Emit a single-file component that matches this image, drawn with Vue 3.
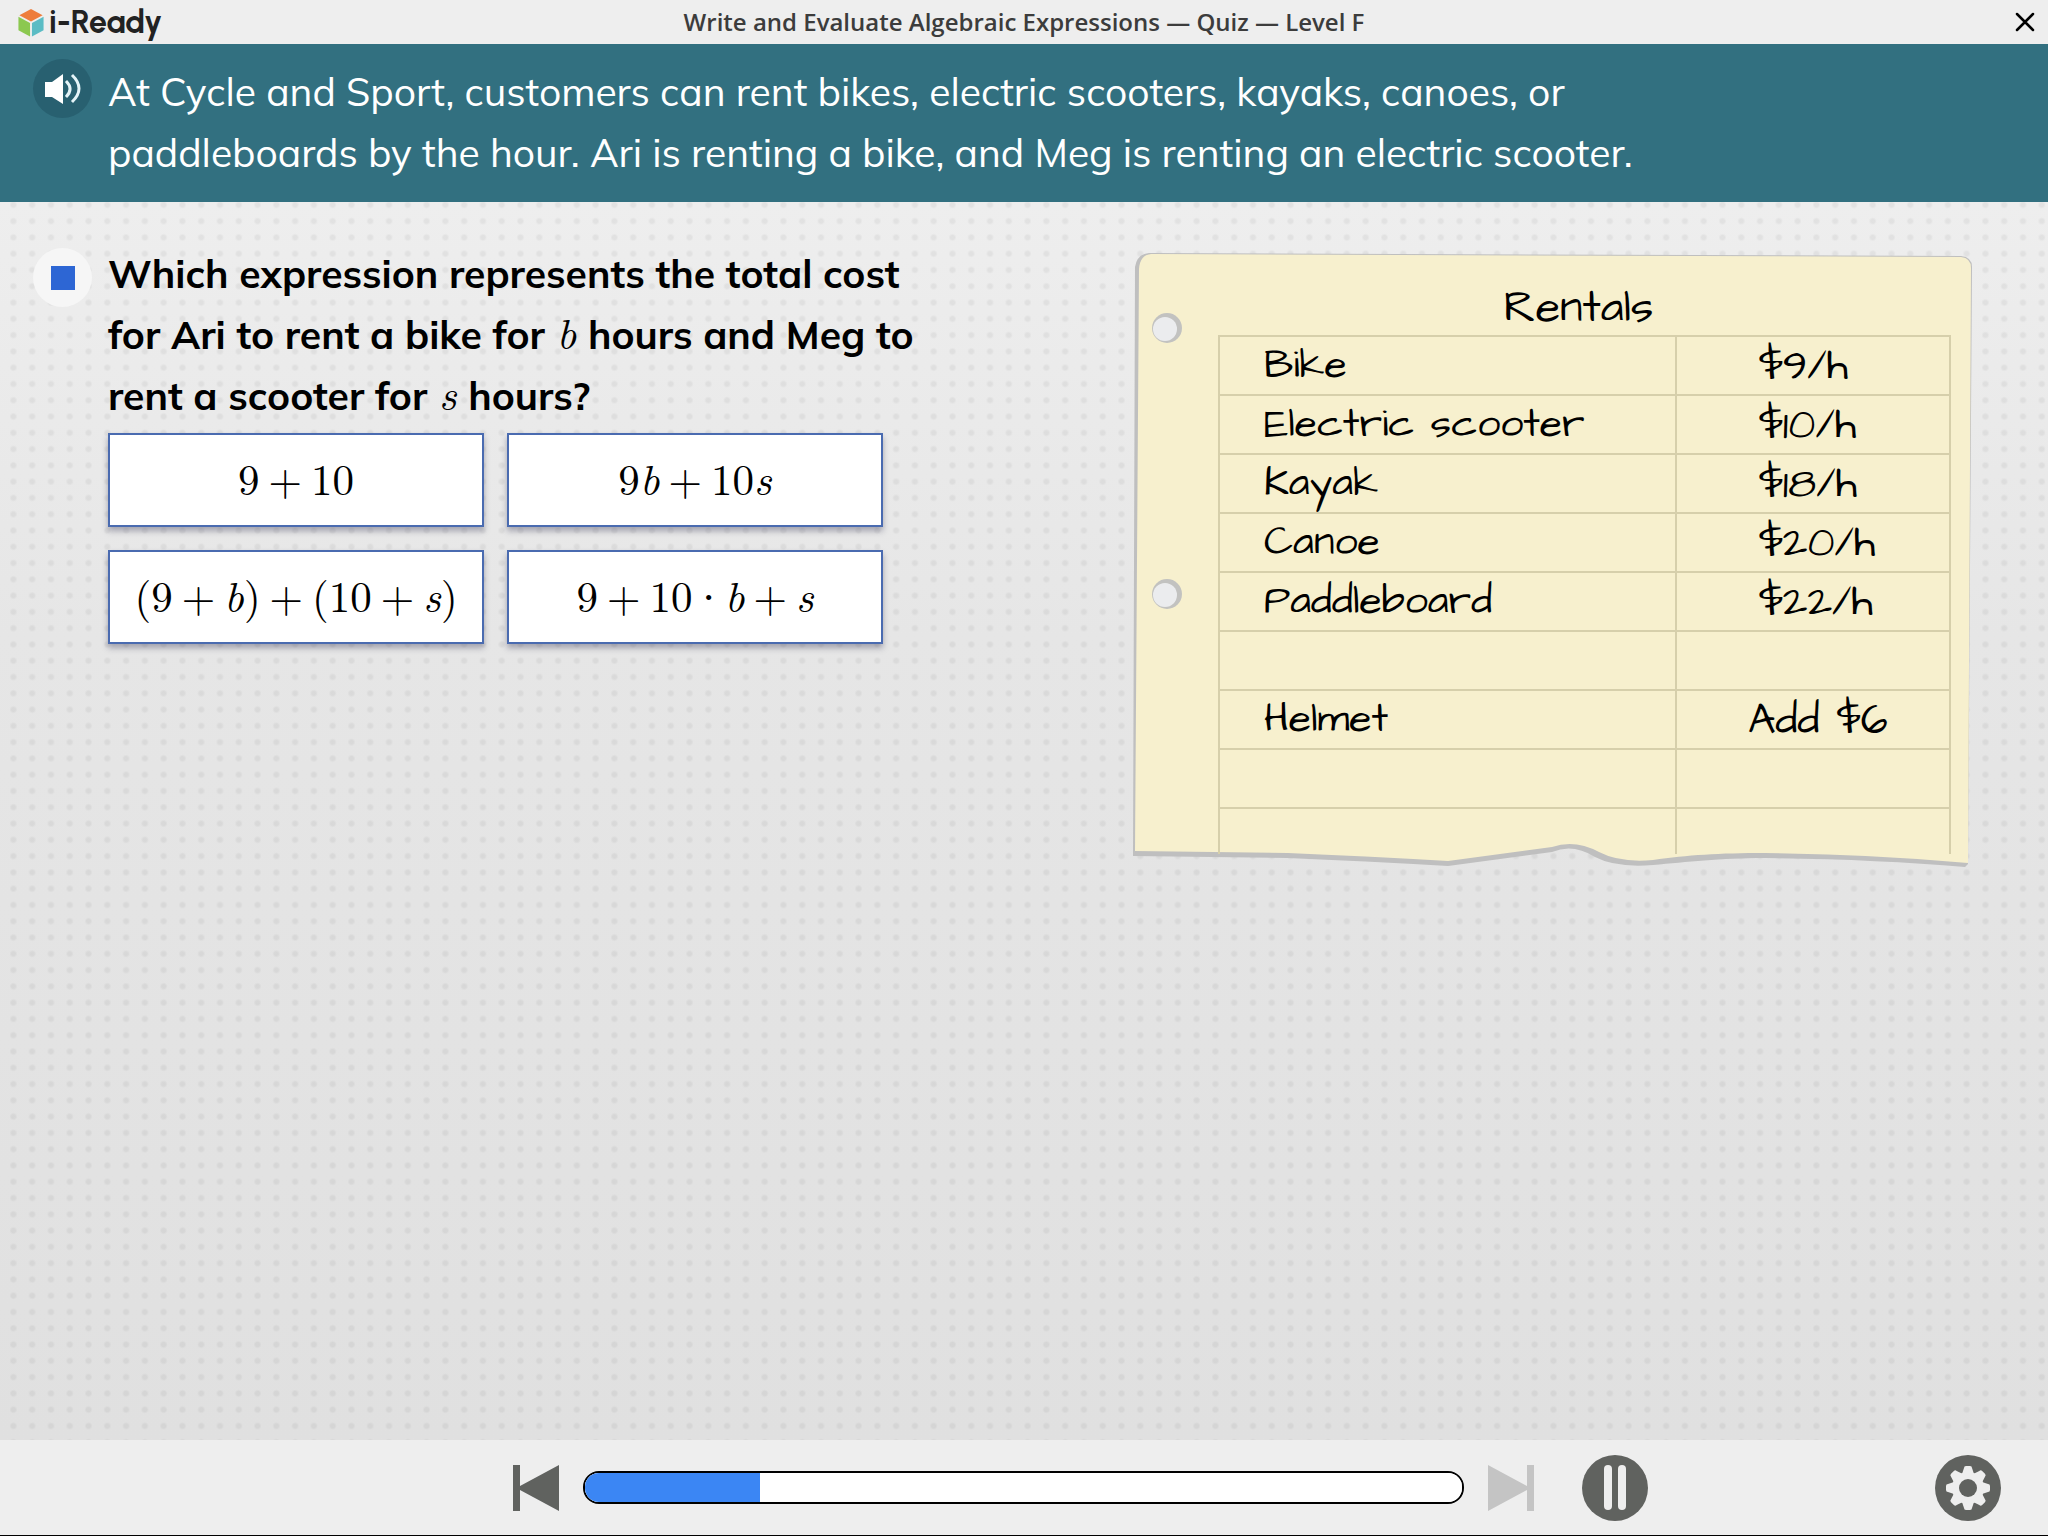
<script setup>
import { ref } from 'vue'

const progress = ref(20)
const selected = ref(null)

const answers = [
  ['9', '+', '10'],
  ['9', 'b', '+', '10', 's'],
  ['(', '9', '+', 'b', ')', '+', '(', '10', '+', 's', ')'],
  ['9', '+', '10', '·', 'b', '+', 's'],
]

const rentals = [
  { name: 'Bike', price: '$9/h' },
  { name: 'Electric scooter', price: '$10/h' },
  { name: 'Kayak', price: '$18/h' },
  { name: 'Canoe', price: '$20/h' },
  { name: 'Paddleboard', price: '$22/h' },
  { name: '', price: '' },
  { name: 'Helmet', price: 'Add $6', wide: true },
  { name: '', price: '' },
  { name: '', price: '' },
]

function tokenClass(token) {
  if (token === '+') return 'operator'
  if (token === '·') return 'operator times'
  return /[a-z]/.test(token) ? 'variable' : 'number'
}
</script>

<template>
  <div class="app">
    <header class="topbar">
      <div class="brand">
        <svg class="brand-cube" viewBox="0 0 26 30" aria-hidden="true">
          <path fill="#ee7d3b" d="M13 1 25 7.500 13 14 1 7.500z" />
          <path fill="#8cc850" d="M0 9 12 15.500v14L0 23z" />
          <path fill="#5bbcc4" d="M26 9 14 15.500v14L26 23z" />
        </svg>
        <span class="brand-name">i-Ready</span>
      </div>
      <h1 class="title">Write and Evaluate Algebraic Expressions — Quiz — Level F</h1>
      <button class="close" type="button" aria-label="Close">
        <svg viewBox="0 0 20 20" aria-hidden="true">
          <path d="M2 2 18 18M18 2 2 18" stroke="#000" stroke-width="2.500" stroke-linecap="round" />
        </svg>
      </button>
    </header>

    <section class="prompt">
      <button class="speak" type="button" aria-label="Read aloud">
        <svg viewBox="0 0 36 32" aria-hidden="true">
          <path fill="#fff" d="M0 9h7l11-8v30l-11-7H0z" />
          <g fill="none" stroke="#e4f4f8" stroke-width="3">
            <path d="M21 8q8 8 0 16" />
            <path d="M27 2q14 13.500 0 27" />
          </g>
        </svg>
      </button>
      <p class="prompt-text">
        At Cycle and Sport, customers can rent bikes, electric scooters, kayaks, canoes, or<br />
        paddleboards by the hour. Ari is renting a bike, and Meg is renting an electric scooter.
      </p>
    </section>

    <main class="stage">
      <section class="question">
        <button class="stop" type="button" aria-label="Stop reading"><span class="stop-mark"></span></button>
        <div class="question-body">
          <h2 class="question-text">
            Which expression represents the total cost<br />
            for Ari to rent a bike for <i class="math">b</i> hours and Meg to<br />
            rent a scooter for <i class="math">s</i> hours?
          </h2>
          <div class="answers">
            <button
              v-for="(tokens, index) in answers"
              :key="index"
              class="answer"
              type="button"
              :aria-pressed="selected === index"
              @click="selected = index"
            >
              <span class="expression"><span v-for="(token, i) in tokens" :key="i" :class="tokenClass(token)">{{ token }}</span></span>
            </button>
          </div>
        </div>
      </section>

      <section class="note">
        <svg class="paper" viewBox="0 0 839 615" preserveAspectRatio="none" aria-hidden="true">
          <path
            fill="#bfbfbf"
            d="M2 14Q4 1 16 0L828 3Q839 4 839 14L835 611 832 614Q740 606 632 605C585 605 555 609 520 612Q483 615 462 604Q440 590 419 599L315 613Q230 608 155 605L0 603z"
          />
          <path
            fill="#f7f0ce"
            d="M6 16Q7 2 18 1L828 4Q838 5 838 15L835 610Q740 601 632 600C585 600 555 602 520 607Q487 610 466 599Q442 586 419 594L315 608Q230 603 155 600L2 598z"
          />
          <g v-for="y in [75, 341]" :key="y">
            <circle cx="34" :cy="y" r="15" fill="#c2c2c0" />
            <circle cx="32" :cy="y + 1" r="12" fill="#ebecee" />
          </g>
        </svg>
        <table class="rentals">
          <caption>Rentals</caption>
          <tbody>
            <tr v-for="(row, index) in rentals" :key="index">
              <td class="name">{{ row.name }}</td>
              <td class="price" :class="{ wide: row.wide }">{{ row.price }}</td>
            </tr>
          </tbody>
        </table>
      </section>
    </main>

    <footer class="controls">
      <button class="step" type="button" aria-label="Previous">
        <svg viewBox="0 0 46 46" aria-hidden="true"><path fill="#60625f" d="M0 0h7v21L46 0v46L7 25v21H0z" /></svg>
      </button>
      <progress class="progress" :value="progress" max="100" aria-label="Quiz progress"></progress>
      <button class="step" type="button" aria-label="Next" disabled>
        <svg viewBox="0 0 46 46" aria-hidden="true"><path fill="#c4c4c4" d="M46 0h-7v21L0 0v46l39-21v21h7z" /></svg>
      </button>
      <button class="round pause" type="button" aria-label="Pause">
        <svg viewBox="0 0 66 66" aria-hidden="true">
          <circle cx="33" cy="33" r="33" fill="#60625f" />
          <rect x="22" y="10" width="8" height="45" rx="4" fill="#eee" />
          <rect x="36" y="10" width="8" height="45" rx="4" fill="#eee" />
        </svg>
      </button>
      <button class="round settings" type="button" aria-label="Settings">
        <svg viewBox="-33 -33 66 66" aria-hidden="true">
          <circle r="33" fill="#60625f" />
          <g fill="#eee">
            <circle r="16" />
            <path
              v-for="n in 8"
              :key="n"
              :transform="`rotate(${n * 45})`"
              d="M-6-14-4-20Q-4-22-2-22H2Q4-22 4-20L6-14z"
            />
          </g>
          <circle r="9" fill="#60625f" />
        </svg>
      </button>
    </footer>
  </div>
</template>

<style>
body {
  margin: 0;
}
</style>

<style scoped>
.app {
  display: flex;
  flex-direction: column;
  min-height: 100vh;
  box-sizing: border-box;
  border-bottom: 1px solid #000;
  background: #eee;
  color: #000;
  font-family: Mulish, "Open Sans", sans-serif;
}

button {
  display: flex;
  align-items: center;
  justify-content: center;
  margin: 0;
  padding: 0;
  border: 0;
  background: none;
  color: inherit;
  font: inherit;
  cursor: pointer;
}

.topbar {
  display: grid;
  grid-template-columns: 1fr auto 1fr;
  align-items: center;
  height: 44px;
  padding: 0 13px;
}

.brand {
  display: flex;
  align-items: center;
  gap: 5px;
  padding-left: 5px;
}

.brand-cube {
  width: 26px;
  height: 29px;
}

.brand-name {
  color: #222;
  font: 700 32px/40px Urbanist, Inter, sans-serif;
}

.title {
  margin: 0;
  color: #3c3c3c;
  font: 600 24px/44px "Open Sans", sans-serif;
}

.close {
  justify-self: end;
  width: 20px;
  height: 20px;
}

.close svg {
  width: 20px;
  height: 20px;
}

.prompt {
  display: flex;
  gap: 16px;
  padding: 15px 33px 19px;
  background: #327080;
  color: #fff;
}

.speak,
.stop {
  flex: none;
  width: 59px;
  height: 59px;
  border-radius: 50%;
}

.speak {
  background: #286070;
}

.speak svg {
  width: 36px;
  height: 32px;
}

.prompt-text {
  margin: 0;
  padding-top: 2px;
  font-size: 39px;
  font-weight: 400;
  line-height: 61px;
}

.stage {
  display: grid;
  grid-template-columns: 1100fr 839fr;
  flex: 1;
  align-items: start;
  padding: 41px 76px 44px 33px;
  background:
    radial-gradient(circle, rgba(0, 0, 0, 0.05) 2px, transparent 4px) 4px 11px,
    linear-gradient(#eee, #e6e6e6 35%, #e0e0e0);
  background-size: calc(100% / 109) calc(100% / 76), auto;
}

.question {
  display: flex;
  gap: 16px;
}

.stop {
  background: #f6f6f6;
  margin-top: 5px;
}

.stop-mark {
  width: 24px;
  height: 24px;
  background: #2d66d4;
}

.question-text {
  margin: 0;
  font-size: 39px;
  font-weight: 700;
  line-height: 61px;
}

.math {
  margin: 0 1px;
  font: italic 400 43px/43px "Latin Modern Roman", "Liberation Serif", serif;
}

.answers {
  display: grid;
  grid-template-columns: 376px 376px;
  gap: 23px;
  margin-top: 7px;
}

.answer {
  height: 94px;
  box-sizing: border-box;
  padding-bottom: 6px;
  border: 2px solid #4a6bb0;
  background: #fff;
  box-shadow: 0 4px 6px rgba(60, 60, 90, 0.4);
  font: 400 43px/60px "Latin Modern Roman", "Liberation Serif", serif;
}

.expression {
  white-space: nowrap;
}

.variable {
  font-style: italic;
}

.operator {
  margin: 0 9px;
}

.times {
  font-family: "Liberation Serif", serif;
  line-height: 1;
}

.note {
  position: relative;
  padding: 28px 21px 0 85px;
  margin-top: 10px;
  height: 615px;
  box-sizing: border-box;
}

.paper {
  position: absolute;
  inset: 0;
  width: 100%;
  height: 100%;
}

.rentals {
  position: relative;
  width: 100%;
  border-collapse: collapse;
  table-layout: fixed;
  font: 400 41px/54px "Architects Daughter", "Open Sans", sans-serif;
}

.rentals caption {
  padding-right: 12px;
  font-size: 45px;
}

.rentals td {
  height: 59px;
  box-sizing: border-box;
  padding: 0;
  border: 2px solid #d6cfab;
}

.rentals tr:last-child td {
  height: 46px;
  border-bottom: 0;
}

.rentals .name {
  width: 62.5%;
  padding-left: 44px;
}

.rentals .price {
  padding: 3px 0 0 82px;
  font-size: 43px;
}

.rentals .wide {
  padding-left: 71px;
}

.controls {
  display: flex;
  align-items: center;
  gap: 24px;
  height: 95px;
  padding: 0 47px 0 calc(25% + 1px);
}

.step,
.step svg {
  width: 46px;
  height: 46px;
}

.progress {
  width: 43vw;
  height: 33px;
  box-sizing: border-box;
  appearance: none;
  overflow: hidden;
  border: 2px solid #000;
  border-radius: 16px;
  background: #fff;
}

.progress::-webkit-progress-bar {
  background: #fff;
}

.progress::-webkit-progress-value {
  background: #3b86f4;
}

.round,
.round svg {
  width: 66px;
  height: 66px;
}

.pause {
  margin-left: 24px;
}

.settings {
  margin-left: auto;
}
</style>
